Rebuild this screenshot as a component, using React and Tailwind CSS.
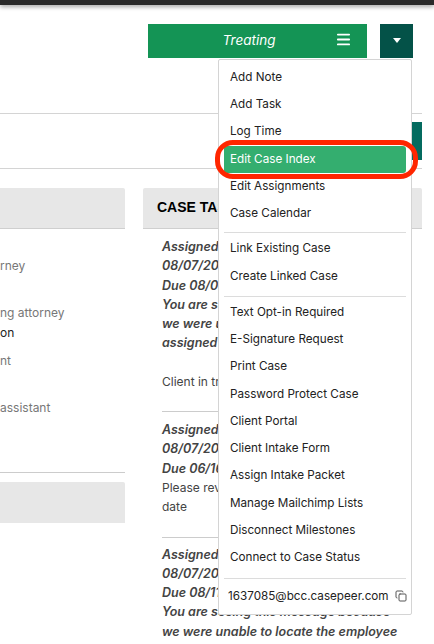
import React from 'react';
import { Menu, Copy } from 'lucide-react';

const groups = [
  ['Add Note', 'Add Task', 'Log Time', 'Edit Case Index', 'Edit Assignments', 'Case Calendar'],
  ['Link Existing Case', 'Create Linked Case'],
  ['Text Opt-in Required', 'E-Signature Request', 'Print Case', 'Password Protect Case', 'Client Portal', 'Client Intake Form', 'Assign Intake Packet', 'Manage Mailchimp Lists', 'Disconnect Milestones', 'Connect to Case Status'],
];

const Dropdown = () => (
  <div className="absolute left-[218px] top-[59px] w-[194px] h-[556px] bg-white border border-[#d4d4d4] rounded-[2px] pt-[4px] px-[5px] z-10">
    {groups.map((items, i) => (
      <div key={i} className={i === 0 ? '' : i === 1 ? 'border-t border-[#dcdcdc] mt-[4px] pt-[3px]' : 'border-t border-[#dcdcdc] mt-[6px] pt-[2px]'}>
        {items.map(item => (
          <div
            key={item}
            className={`h-[27.25px] flex items-center pl-[6px] text-[11.7px] ${item === 'Edit Case Index' ? 'bg-[#34ae6f] text-white rounded-[3px]' : 'text-[#222]'}`}
          >
            {item}
          </div>
        ))}
      </div>
    ))}
    <div className="border-t border-[#dcdcdc] mt-[6px] pt-[8px] flex items-center gap-[6px] pl-[4px] text-[11.7px] text-[#222]">
      1637085@bcc.casepeer.com
      <Copy size={12} className="text-[#555] shrink-0" />
    </div>
  </div>
);

const Task = ({ meta, body, last }) => (
  <div className={last ? 'pt-[7px]' : 'border-b border-[#ccc] pt-[8px] pb-[20px]'}>
    <div className="italic font-semibold text-[12.5px] text-[#444]">
      {meta.map(line => <div key={line}>{line}</div>)}
    </div>
    {body}
  </div>
);

export default function App() {
  return (
    <div className="relative w-[434px] h-[644px] overflow-hidden bg-white text-[12px] leading-[19.3px] font-['Inter','Noto_Sans',sans-serif]">
      <div className="h-[5px] bg-[#2a2a2a] shadow-[0_2px_4px_rgba(0,0,0,0.35)]" />

      <div className="flex justify-end pt-[19px] pr-[21px] gap-[13px]">
        <div className="relative w-[219px] h-[34px] bg-[#149455] text-white italic text-[13.5px] flex items-center justify-center pr-[17px]">
          Treating
          <Menu size={17} strokeWidth={2.5} className="absolute right-[15px] top-[7px]" />
        </div>
        <div className="w-[33px] h-[34px] bg-[#045248] flex items-center justify-center pb-[2px]">
          <div className="w-0 h-0 border-x-[4px] border-x-transparent border-t-[5px] border-t-white" />
        </div>
      </div>

      <div className="mt-[55px] mr-[12px] h-[56px] border-t border-b border-[#d4d4d4] flex justify-end pt-[8px]">
        <div className="w-[20px] h-[38px] bg-[#046b5f]" />
      </div>

      <div className="flex gap-[18px] mt-[19px] mr-[12px]">
        <div className="w-[125px] shrink-0">
          <div className="h-[41px] bg-[#e7e7e7] border-b border-[#cfcfcf] rounded-tr-[2px]" />
          <div className="h-[244px] border-b border-[#ccc] pt-[27px] text-[#777]">
            <div>rney</div>
            <div className="mt-[28px]">ng attorney</div>
            <div className="text-[#222]">on</div>
            <div className="mt-[9px]">nt</div>
            <div className="mt-[28px]">assistant</div>
          </div>
          <div className="h-[41px] mt-[9px] bg-[#e7e7e7] rounded-tr-[2px]" />
        </div>

        <div className="flex-1">
          <div className="h-[41px] bg-[#e7e7e7] border-b border-[#cfcfcf] rounded-t-[2px] pl-[14px] flex items-center font-['Liberation_Sans',sans-serif] font-bold text-[14px] text-black">
            CASE TASKS
          </div>
          <div className="px-[19px] whitespace-nowrap text-[#444]">
            <Task
              meta={['Assigned to: Staff', '08/07/2020', 'Due 08/07/2020', 'You are seeing this message because', 'we were unable to locate the employee', 'assigned to this task']}
              body={<div className="mt-[19px]">Client in treatment</div>}
            />
            <Task
              meta={['Assigned to: Staff', '08/07/2020', 'Due 06/16/2020']}
              body={<div>Please review treatment<br />date</div>}
            />
            <Task
              last
              meta={['Assigned to: Staff', '08/07/2020', 'Due 08/11/2020', 'You are seeing this message because', 'we were unable to locate the employee']}
            />
          </div>
        </div>
      </div>

      <Dropdown />

      {/* red marker drawn over the screenshot */}
      <div className="absolute left-[215px] top-[140px] w-[203px] h-[39px] border-[5px] border-[#ff2600] rounded-[18px] z-20" />
    </div>
  );
}
